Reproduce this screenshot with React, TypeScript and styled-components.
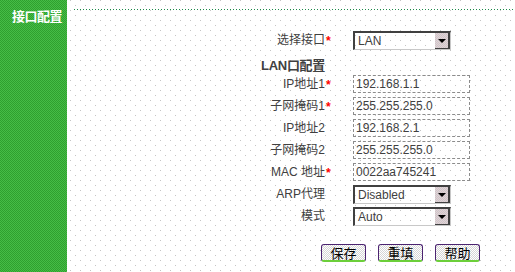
import styled, { createGlobalStyle } from "styled-components"

const GlobalStyle = createGlobalStyle`
  html, body {
    margin: 0;
    padding: 0;
    background: #ffffff;
  }
  body {
    font-family: "Liberation Sans", "Noto Sans CJK SC", sans-serif;
    font-size: 12px;
    color: #404040;
  }
`

const dots = `
  radial-gradient(circle at 0.5px 0.5px, #c4c4c4 0.7px, transparent 0.9px) 0 0 / 10px 10px,
  radial-gradient(circle at 0.5px 0.5px, #c4c4c4 0.7px, transparent 0.9px) 5px 5px / 10px 10px,
  #ffffff
`

const Page = styled.div`
  display: flex;
  width: 515px;
  height: 272px;
  overflow: hidden;
  background: ${dots};
`

const Sidebar = styled.div`
  width: 67px;
  flex-shrink: 0;
  padding: 9px 0 0 12px;
  box-sizing: border-box;
  background: repeating-conic-gradient(#46bd46 0 25%, #2fa02f 0 50%) 0 0 / 2px 2px;
`

const SideTitle = styled.div`
  color: #ffffff;
  font-family: "Noto Sans CJK SC", sans-serif;
  font-weight: 700;
  font-size: 13px;
  line-height: 14px;
  letter-spacing: -0.5px;
`

const Main = styled.div`
  flex: 1;
  padding-top: 9px;
`

const Rule = styled.div`
  margin-left: 7px;
  height: 1px;
  background: repeating-linear-gradient(90deg, #1d8a4a 0 1px, transparent 1px 3px);
`

const Form = styled.div`
  display: grid;
  grid-template-columns: 258px 28px 1fr;
  grid-auto-rows: 18px;
  row-gap: 4px;
  margin-top: 21px;
`

const Label = styled.div`
  text-align: right;
  line-height: 18px;
  white-space: nowrap;
`

const Star = styled.div`
  color: #ff0000;
  font-weight: 700;
  font-size: 12px;
  line-height: 20px;
  padding-left: 1px;
`

const Heading = styled.div`
  grid-column: 1 / 4;
  height: 20px;
  width: 258px;
  text-align: right;
  font-weight: 700;
  font-size: 13px;
  line-height: 14px;
  padding-top: 6px;
  box-sizing: border-box;
  color: #404040;
  letter-spacing: -0.3px;
`

const TextBox = styled.div`
  width: 117px;
  height: 18px;
  box-sizing: border-box;
  border: 1px dashed #8c8c8c;
  padding-left: 2px;
  line-height: 16px;
  font-size: 12px;
  color: #404040;
`

const SelectBox = styled.div`
  display: flex;
  width: 98px;
  height: 19px;
  box-sizing: border-box;
  border-style: solid;
  border-width: 2px 1px 1px 2px;
  border-color: #404040 #c8c8c8 #c8c8c8 #404040;
`

const SelectValue = styled.div`
  flex: 1;
  padding-left: 3px;
  line-height: 16px;
  font-size: 12px;
  color: #404040;
`

const SelectArrow = styled.div`
  width: 15px;
  display: flex;
  align-items: center;
  justify-content: center;
  box-sizing: border-box;
  border-right: 2px solid #404040;
  border-bottom: 1px solid #404040;
  background: repeating-conic-gradient(#e6cfd6 0 25%, #c9c9c9 0 50%) 0 0 / 2px 2px;
  &::after {
    content: "";
    border-left: 4px solid transparent;
    border-right: 4px solid transparent;
    border-top: 4px solid #000000;
    margin-top: 1px;
  }
`

const Buttons = styled.div`
  display: flex;
  gap: 12px;
  margin: 19px 0 0 254px;
`

const Button = styled.div`
  width: 45px;
  height: 18px;
  box-sizing: border-box;
  border: 1px solid #4b2370;
  border-bottom: 2px solid #6ccf3a;
  border-radius: 3px;
  background: repeating-conic-gradient(#ffffff 0 25%, #d6d6d6 0 50%) 0 0 / 2px 2px;
  color: #000000;
  font-family: "Noto Sans CJK SC", sans-serif;
  font-size: 13px;
  line-height: 15px;
  text-align: center;
`

interface FieldProps {
  label: string
  required?: boolean
  children: React.ReactNode
}

function Field({ label, required, children }: FieldProps) {
  return (
    <>
      <Label>{label}</Label>
      <Star>{required ? "*" : ""}</Star>
      <div>{children}</div>
    </>
  )
}

function Select({ value }: { value: string }) {
  return (
    <SelectBox>
      <SelectValue>{value}</SelectValue>
      <SelectArrow />
    </SelectBox>
  )
}

export default function App() {
  return (
    <>
      <GlobalStyle />
      <Page>
        <Sidebar>
          <SideTitle>接口配置</SideTitle>
        </Sidebar>
        <Main>
          <Rule />
          <Form>
            <Field label="选择接口" required>
              <Select value="LAN" />
            </Field>
            <Heading>LAN口配置</Heading>
            <Field label="IP地址1" required>
              <TextBox>192.168.1.1</TextBox>
            </Field>
            <Field label="子网掩码1" required>
              <TextBox>255.255.255.0</TextBox>
            </Field>
            <Field label="IP地址2">
              <TextBox>192.168.2.1</TextBox>
            </Field>
            <Field label="子网掩码2">
              <TextBox>255.255.255.0</TextBox>
            </Field>
            <Field label="MAC 地址" required>
              <TextBox>0022aa745241</TextBox>
            </Field>
            <Field label="ARP代理">
              <Select value="Disabled" />
            </Field>
            <Field label="模式">
              <Select value="Auto" />
            </Field>
          </Form>
          <Buttons>
            <Button>保存</Button>
            <Button>重填</Button>
            <Button>帮助</Button>
          </Buttons>
        </Main>
      </Page>
    </>
  )
}
